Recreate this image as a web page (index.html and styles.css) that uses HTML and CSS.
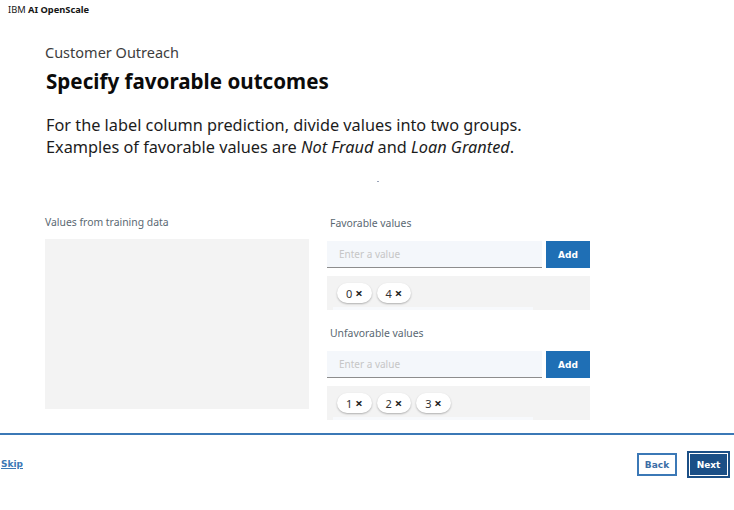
FILE: index.html
```html
<!DOCTYPE html>
<html lang="en">
<head>
<meta charset="utf-8">
<title>IBM AI OpenScale</title>
<link rel="stylesheet" href="styles.css">
</head>
<body>
<div class="page">
  <header class="topbar">IBM <b>AI OpenScale</b></header>
  <main class="content">
    <div class="eyebrow">Customer Outreach</div>
    <h1 class="title">Specify favorable outcomes</h1>
    <p class="lead">For the label column prediction, divide values into two groups.<br>Examples of favorable values are <i>Not Fraud</i> and <i>Loan Granted</i>.</p>
    <div class="dot-row"><span class="dot"></span></div>
    <div class="columns">
      <section class="col-left">
        <div class="label">Values from training data</div>
        <div class="source-box"></div>
      </section>
      <section class="col-right">
        <div class="group">
          <div class="label label-r">Favorable values</div>
          <div class="entry">
            <div class="input">Enter a value</div>
            <button class="add">Add</button>
          </div>
          <div class="tags">
            <span class="tag">0 <span class="x">×</span></span>
            <span class="tag">4 <span class="x">×</span></span>
            <span class="strip"></span>
          </div>
        </div>
        <div class="group group-2">
          <div class="label label-r">Unfavorable values</div>
          <div class="entry">
            <div class="input">Enter a value</div>
            <button class="add">Add</button>
          </div>
          <div class="tags">
            <span class="tag">1 <span class="x">×</span></span>
            <span class="tag">2 <span class="x">×</span></span>
            <span class="tag">3 <span class="x">×</span></span>
            <span class="strip"></span>
          </div>
        </div>
      </section>
    </div>
  </main>
  <footer class="footer">
    <a class="skip" href="#">Skip</a>
    <div class="actions">
      <button class="btn-back">Back</button>
      <button class="btn-next">Next</button>
    </div>
  </footer>
</div>
</body>
</html>
```

FILE: styles.css
```css
* { box-sizing: border-box; }
html, body { margin: 0; padding: 0; background: #fff; }
body {
  font-family: "Noto Sans", "Open Sans", sans-serif;
  color: #161616;
  width: 734px;
  height: 510px;
  overflow: hidden;
}
.topbar {
  font-size: 9.3px;
  line-height: 14px;
  padding: 3px 0 0 8px;
  height: 17px;
  color: #161616;
}
.topbar b { font-weight: 700; }
.content { padding-left: 45px; }
.eyebrow {
  margin-top: 25px;
  font-size: 14.5px;
  line-height: 20px;
  color: #3d3d3d;
}
.title {
  margin: 5px 0 0 1px;
  font-size: 20.6px;
  line-height: 28px;
  font-weight: 700;
  color: #0b0b0b;
}
.lead {
  margin: 19px 0 0 1px;
  font-size: 16.3px;
  line-height: 22px;
  color: #1c1c1c;
}
.dot-row { height: 50px; padding: 23px 0 0 332px; }
.dot { display: block; width: 2px; height: 1px; background: #9aa3b8; }
.columns {
  display: flex;
  gap: 18px;
  margin-top: 6px;
}
.label {
  font-size: 10.4px;
  line-height: 16px;
  color: #5a6872;
}
.label-r { padding-left: 3px; }
.col-left { width: 264px; }
.source-box {
  margin-top: 9px;
  height: 170px;
  background: #f3f3f3;
}
.col-right { width: 263px; padding-top: 1px; }
.entry {
  display: flex;
  gap: 4px;
  margin-top: 10px;
  height: 27px;
}
.input {
  flex: 1;
  background: #f4f7fb;
  border-bottom: 1px solid #8d8d8d;
  font-size: 10px;
  line-height: 26px;
  padding-left: 12px;
  color: #c6c6c6;
}
.add {
  width: 44px;
  height: 27px;
  border: 0;
  padding: 0;
  background: #1f6fb5;
  color: #fff;
  font-family: "DejaVu Sans", sans-serif;
  font-size: 9px;
  font-weight: 700;
}
.tags {
  position: relative;
  display: flex;
  gap: 5px;
  align-items: flex-start;
  margin-top: 8px;
  height: 34px;
  padding: 7px 0 0 10px;
  background: #f3f3f3;
}
.tag {
  height: 20px;
  padding: 0 9px 0 9px;
  border-radius: 10px;
  background: #fff;
  box-shadow: 0 1px 2px rgba(0,0,0,0.28);
  font-size: 11px;
  line-height: 20px;
  color: #333;
  white-space: nowrap;
}
.tag .x { font-size: 13px; font-weight: 700; color: #222; }
.strip {
  position: absolute;
  left: 6px;
  bottom: 0;
  width: 200px;
  height: 3px;
  background: #f7f9fc;
}
.group-2 { margin-top: 15px; }
.footer {
  margin-top: 13px;
  border-top: 2px solid #3b78b6;
  display: flex;
  justify-content: space-between;
  align-items: flex-start;
  padding: 17px 5px 0 1px;
}
.skip {
  margin-top: 7px;
  font-family: "DejaVu Sans", sans-serif;
  font-size: 9px;
  font-weight: 700;
  color: #3b78b6;
  text-decoration: underline;
}
.actions { display: flex; gap: 11px; }
.btn-back {
  width: 40px;
  height: 23px;
  margin-top: 1px;
  background: #fff;
  border: 2px solid #3b78b6;
  color: #3b6ea6;
  font-family: "DejaVu Sans", sans-serif;
  font-size: 9px;
  font-weight: 700;
  padding: 0;
}
.btn-next {
  width: 41px;
  height: 25px;
  background: #1b4f86;
  border: 2px solid #fff;
  outline: 1px solid #1b4f86;
  outline-offset: -1px;
  box-shadow: 0 0 0 1px #1b4f86;
  color: #fff;
  font-family: "DejaVu Sans", sans-serif;
  font-size: 9px;
  font-weight: 700;
  padding: 0;
}
```
